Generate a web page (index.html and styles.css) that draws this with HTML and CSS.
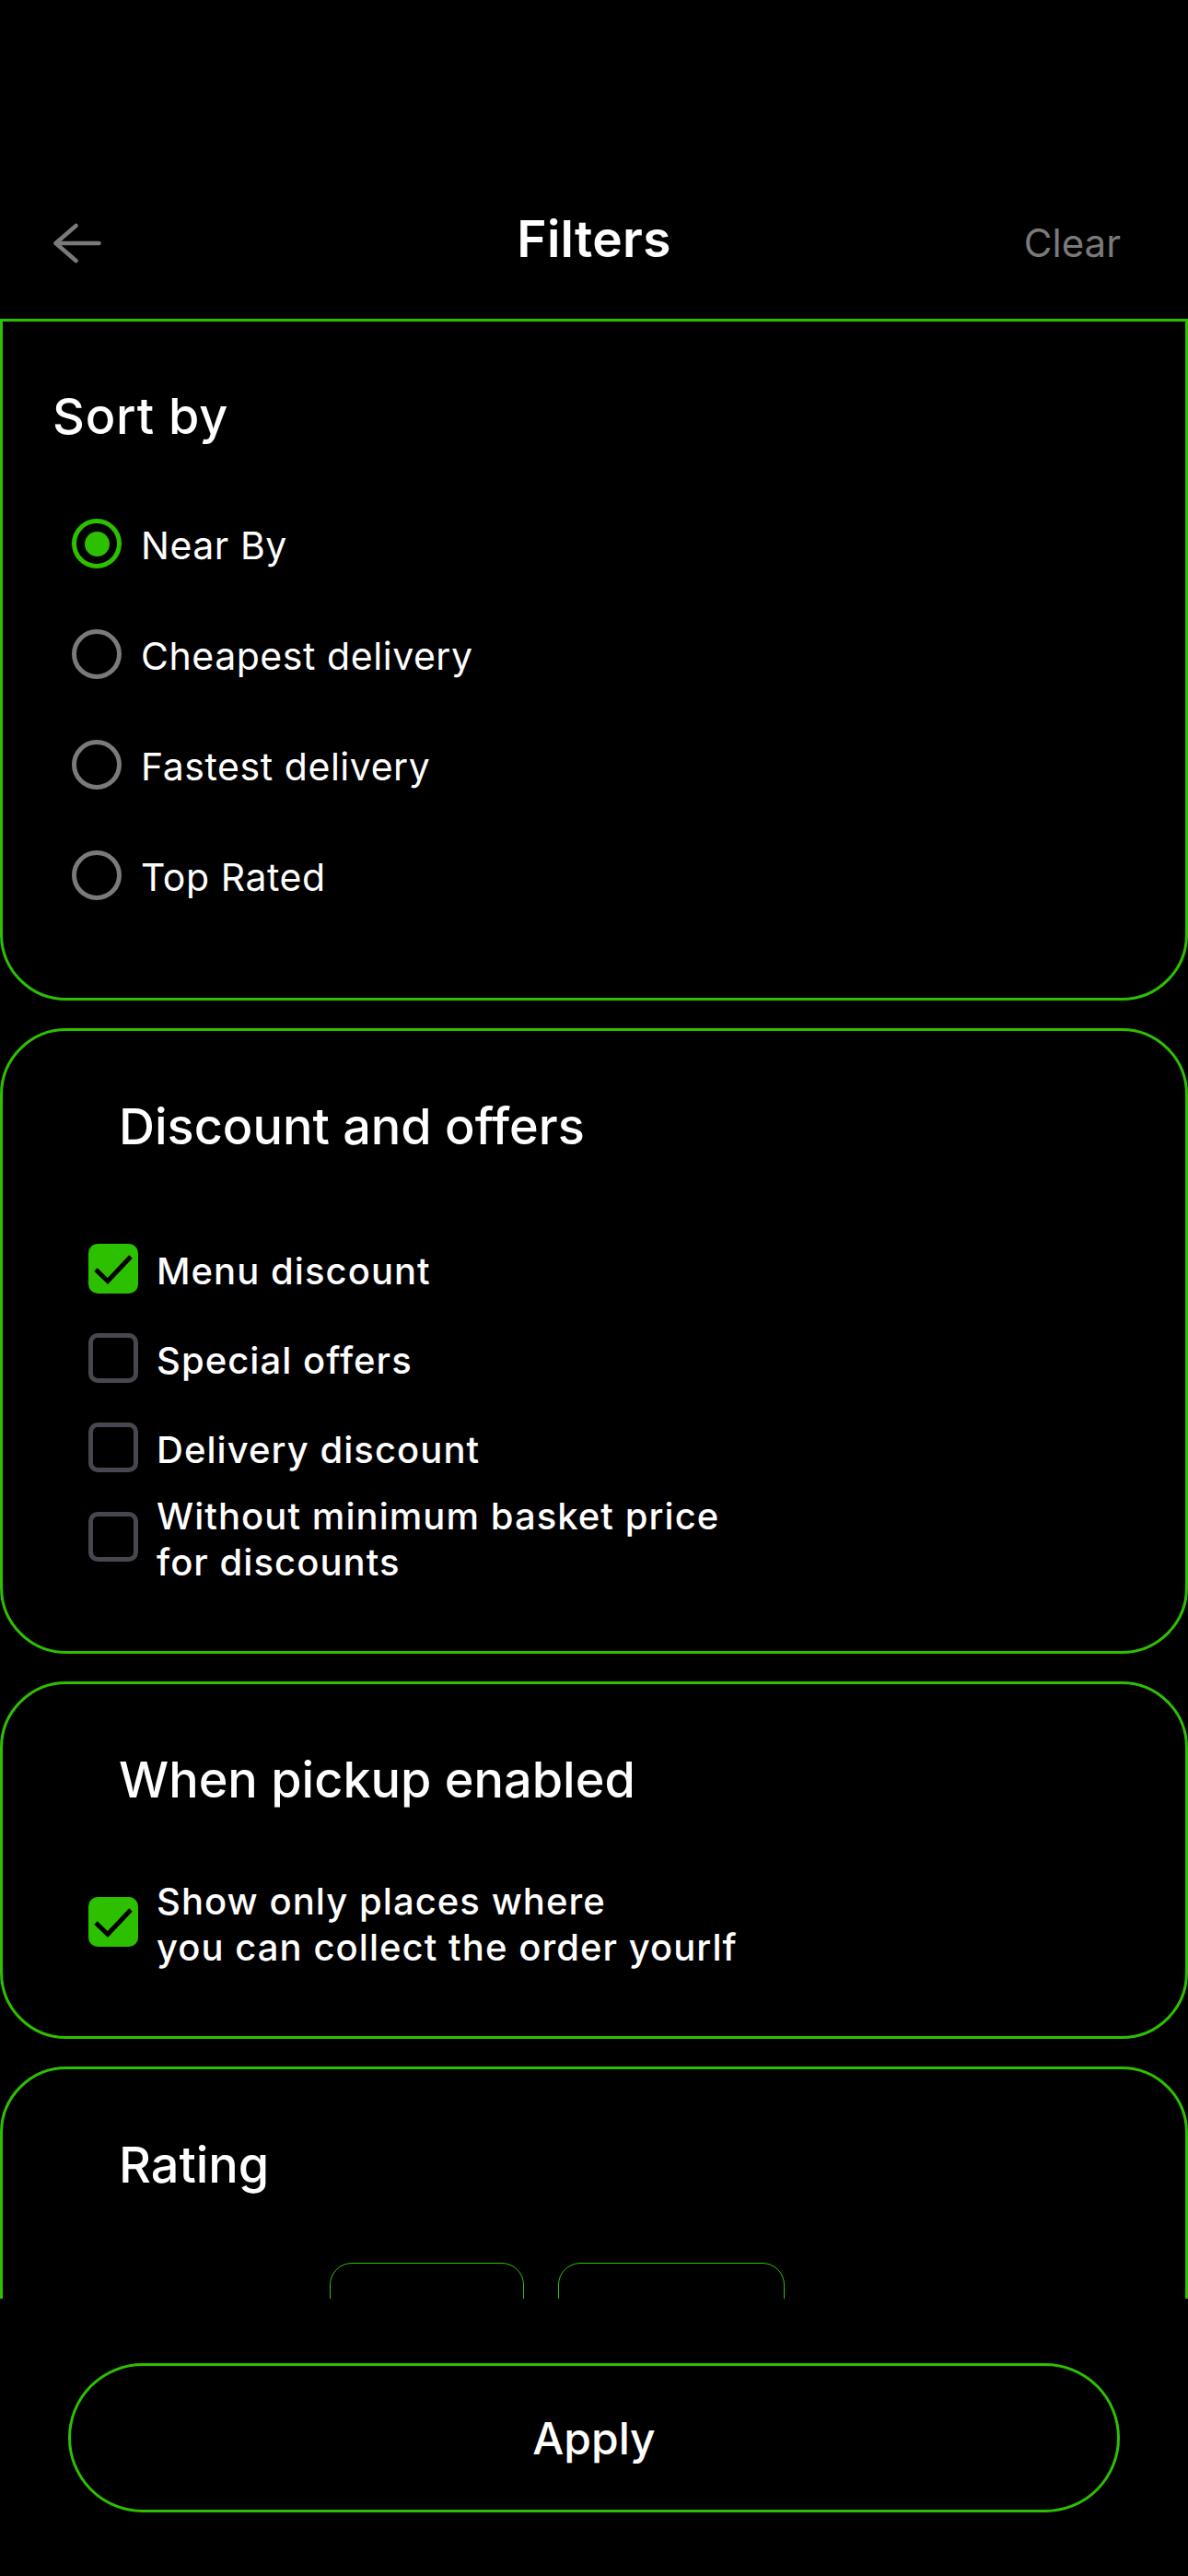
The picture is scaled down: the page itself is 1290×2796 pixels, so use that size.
FILE: index.html
```html
<!DOCTYPE html>
<html lang="en">
<head>
<meta charset="utf-8">
<title>Filters</title>
<link rel="stylesheet" href="styles.css">
</head>
<body>
<div class="screen">
  <header class="header">
    <svg class="back" width="52" height="44" viewBox="0 0 52 44" aria-label="Back">
      <path d="M49.5 22H2.5M24.5 3L2.5 22L24.5 41" fill="none" stroke="#7a7a7a" stroke-width="4.5" stroke-linecap="round" stroke-linejoin="round"/>
    </svg>
    <h1 class="title">Filters</h1>
    <span class="clear">Clear</span>
  </header>

  <main class="content">
    <section class="card card--first">
      <h2 class="card-title card-title--flush">Sort by</h2>
      <ul class="radios">
        <li class="radio-row"><span class="radio radio--on"></span><span class="radio-label">Near By</span></li>
        <li class="radio-row"><span class="radio"></span><span class="radio-label">Cheapest delivery</span></li>
        <li class="radio-row"><span class="radio"></span><span class="radio-label">Fastest delivery</span></li>
        <li class="radio-row"><span class="radio"></span><span class="radio-label">Top Rated</span></li>
      </ul>
    </section>

    <section class="card">
      <h2 class="card-title">Discount and offers</h2>
      <ul class="checks">
        <li class="check-row">
          <span class="check check--on"><svg width="54" height="54" viewBox="0 0 54 54"><path d="M8 28L21 40.5L46 14" fill="none" stroke="#000" stroke-width="5"/></svg></span>
          <span class="check-label">Menu discount</span>
        </li>
        <li class="check-row"><span class="check"></span><span class="check-label">Special offers</span></li>
        <li class="check-row"><span class="check"></span><span class="check-label">Delivery discount</span></li>
        <li class="check-row"><span class="check"></span><span class="check-label">Without minimum basket price<br>for discounts</span></li>
      </ul>
    </section>

    <section class="card">
      <h2 class="card-title">When pickup enabled</h2>
      <ul class="checks">
        <li class="check-row">
          <span class="check check--on"><svg width="54" height="54" viewBox="0 0 54 54"><path d="M8 28L21 40.5L46 14" fill="none" stroke="#000" stroke-width="5"/></svg></span>
          <span class="check-label">Show only places where<br>you can collect the order yourlf</span>
        </li>
      </ul>
    </section>

    <section class="card">
      <h2 class="card-title">Rating</h2>
      <div class="chips">
        <span class="chip chip--short"></span>
        <span class="chip chip--long"></span>
      </div>
    </section>
  </main>

  <footer class="footer">
    <button class="apply" type="button">Apply</button>
  </footer>
</div>
</body>
</html>
```
FILE: styles.css
```css
* {
  box-sizing: border-box;
  margin: 0;
  padding: 0;
}

html, body {
  background: #000;
}

body {
  font-family: Inter, "Noto Sans", "Liberation Sans", sans-serif;
  color: #fff;
}

.screen {
  width: 1290px;
  height: 2796px;
  display: flex;
  flex-direction: column;
  overflow: hidden;
  background: #000;
}

/* Header */
.header {
  flex: none;
  height: 346px;
  padding: 219px 58px 0 58px;
  display: grid;
  grid-template-columns: 1fr auto 1fr;
  align-items: baseline;
  align-content: start;
}

.back {
  display: block;
  align-self: center;
  margin-top: 4px;
}

.title {
  font-size: 55px;
  line-height: 80px;
  font-weight: 600;
  text-align: center;
  letter-spacing: 0.3px;
}

.clear {
  justify-self: end;
  margin-right: 15px;
  font-size: 42px;
  line-height: 80px;
  font-weight: 400;
  color: #7a7a7a;
}

/* Content */
.content {
  flex: 1;
  min-height: 0;
  overflow: hidden;
  display: flex;
  flex-direction: column;
  gap: 30px;
}

.card {
  flex: none;
  border: 3px solid #2dc000;
  border-radius: 72px;
  padding: 77px 52px 97px 52px;
}

.card--first {
  border-radius: 0 0 72px 72px;
  padding-top: 76px;
  padding-bottom: 106px;
}

.card-title {
  font-size: 54px;
  line-height: 54px;
  font-weight: 500;
  margin-left: 74px;
}

.card-title--flush {
  margin-left: 2px;
  font-weight: 450;
  letter-spacing: 0.8px;
}

/* Radios */
.radios {
  list-style: none;
  margin-top: 84px;
  padding-left: 23px;
  display: flex;
  flex-direction: column;
  gap: 66px;
}

.radio-row {
  height: 54px;
  display: flex;
  align-items: center;
  gap: 21px;
}

.radio {
  flex: none;
  width: 54px;
  height: 54px;
  border-radius: 50%;
  border: 5px solid #7a7a7a;
  display: flex;
  align-items: center;
  justify-content: center;
}

.radio--on {
  border-color: #2dc000;
}

.radio--on::after {
  content: "";
  width: 27px;
  height: 27px;
  border-radius: 50%;
  background: #2dc000;
}

.radio-label {
  margin-top: 5px;
  font-size: 41px;
  line-height: 41px;
  font-weight: 400;
  letter-spacing: 0.55px;
}

/* Checkboxes */
.checks {
  list-style: none;
  margin-top: 100px;
  padding-left: 41px;
  display: flex;
  flex-direction: column;
  gap: 43px;
}

.check-row {
  height: 54px;
  display: flex;
  align-items: center;
  gap: 20px;
}

.check {
  flex: none;
  width: 54px;
  height: 54px;
  border-radius: 10px;
  border: 5px solid #48464e;
}

.check--on {
  border: none;
  background: #2dc000;
}

.check svg {
  display: block;
}

.check-label {
  margin-top: 5px;
  font-size: 40px;
  line-height: 50px;
  font-weight: 500;
  letter-spacing: 1.05px;
  white-space: nowrap;
}

/* Rating chips */
.chips {
  margin-top: 79px;
  margin-left: 303px;
  display: flex;
  gap: 37px;
}

.chip {
  height: 96px;
  border: 1.5px solid #2dc000;
  border-radius: 24px;
}

.chip--short {
  width: 211px;
}

.chip--long {
  width: 246px;
}

/* Footer */
.footer {
  flex: none;
  height: 301px;
  padding: 70px 74px 0 74px;
  background: #000;
}

.apply {
  width: 100%;
  height: 162px;
  border: 3px solid #2dc000;
  border-radius: 81px;
  background: #000;
  color: #fff;
  font-family: Inter, "Noto Sans", "Liberation Sans", sans-serif;
  font-size: 48px;
  font-weight: 500;
}
```
